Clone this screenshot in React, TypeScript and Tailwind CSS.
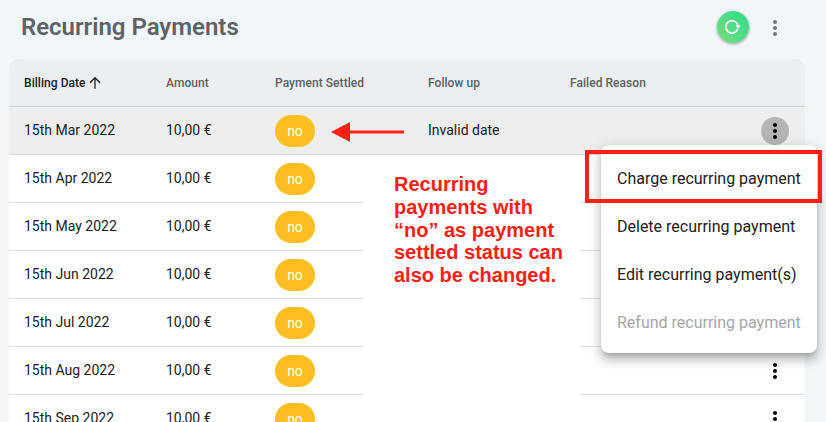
import React from 'react';

const months = ['Mar', 'Apr', 'May', 'Jun', 'Jul', 'Aug', 'Sep'];
const rowGrid = 'grid grid-cols-[142px_109px_153px_142px_1fr_48px] items-center';

function MoreVert({ className }: { className?: string }) {
  return (
    <svg viewBox="0 0 24 24" className={className} fill="currentColor">
      <path d="M12 8c1.1 0 2-.9 2-2s-.9-2-2-2-2 .9-2 2 .9 2 2 2zm0 2c-1.1 0-2 .9-2 2s.9 2 2 2 2-.9 2-2-.9-2-2-2zm0 6c-1.1 0-2 .9-2 2s.9 2 2 2 2-.9 2-2-.9-2-2-2z" />
    </svg>
  );
}

export default function App() {
  return (
    <div className="relative h-[422px] w-[826px] overflow-hidden bg-[#f1f6fa] font-['Roboto',sans-serif]">
      {/* Page Header */}
      <div className="flex h-[59px] items-start pl-[21px] pr-[39px] pt-[11px]">
        <h1 className="flex-1 text-[24px] leading-[32px] font-semibold tracking-[-0.02px] text-[#5f6368]">Recurring Payments</h1>
        <button className="mr-[14px] flex h-8 w-8 items-center justify-center rounded-full bg-gradient-to-tr from-[#74dc78] to-[#14dc90] shadow-[0_1px_3px_rgba(0,0,0,0.4)]">
          <svg viewBox="1.5 0.5 15 15" className="h-4 w-4" fill="none" stroke="white" strokeWidth="1.5">
            <path d="M13.4 10A5.8 5.8 0 1 1 13.7 7" />
            <path d="M11.3 6.6h4.8l-2.4 3z" fill="white" stroke="none" />
          </svg>
        </button>
        <MoreVert className="mt-[5px] h-6 w-6 text-[#757575]" />
      </div>

      {/* Table */}
      <div className="ml-[9px] w-[796px] bg-white">
        <div className={`${rowGrid} h-[48px] rounded-t-lg border-b border-[#cfd3d6] bg-[#ebeff2] text-[12px] font-medium tracking-[0.05px] text-[#616161]`}>
          <div className="flex items-center gap-[2px] pl-[15px] text-[#212121]">
            Billing Date
            <svg viewBox="0 0 24 24" className="h-[14px] w-[14px]" fill="none" stroke="#212121" strokeWidth="2.2">
              <path d="M12 22V3M3.5 11.5 12 3l8.5 8.5" />
            </svg>
          </div>
          <div className="pl-[15px]">Amount</div>
          <div className="pl-[15px]">Payment Settled</div>
          <div className="pl-[15px]">Follow up</div>
          <div className="pl-[15px]">Failed Reason</div>
          <div />
        </div>
        {months.map((m, i) => (
          <div
            key={m}
            className={`${rowGrid} h-[48px] border-b text-[14px] text-[#212121] ${i === 0 ? 'border-[#d6d6d6] bg-[#eeeeee]' : 'border-[#e0e0e0]'}`}
          >
            <div className="pl-[15px]">15th {m} 2022</div>
            <div className="pl-[15px]">10,00 €</div>
            <div className="pl-[15px]">
              <span className="flex h-8 w-10 items-center justify-center rounded-2xl bg-[#ffbf20] pt-[1px] text-[14px] text-white">no</span>
            </div>
            <div className="pl-[15px]">{i === 0 ? 'Invalid date' : ''}</div>
            <div />
            <div className="flex justify-start">
              <span className={`ml-[4px] flex h-7 w-7 items-center justify-center rounded-full ${i === 0 ? 'bg-[#b5b5b5]' : ''}`}>
                <MoreVert className="h-6 w-6 shrink-0 text-black" />
              </span>
            </div>
          </div>
        ))}
      </div>

      {/* Annotation */}
      <div className="absolute left-[363px] top-[155px] h-[267px] w-[217px] bg-white pl-[31px] pt-[18px] font-['Liberation_Sans',sans-serif] text-[20px] leading-[22.8px] font-bold text-[#fe2015]">
        Recurring
        <br />
        payments with
        <br />
        “no” as payment
        <br />
        settled status can
        <br />
        also be changed.
      </div>
      <svg className="absolute left-[331px] top-[122px] h-5 w-[73px]" viewBox="0 0 73 20">
        <path d="M19 0v8.5h54v3H19V20L0 10z" fill="#fe2015" />
      </svg>

      {/* Menu */}
      <div className="absolute left-[601px] top-[145px] w-[216px] rounded-lg bg-white pt-[10px] pb-[6px] text-[16px] text-[#212121] shadow-[0_5px_5px_-3px_rgba(0,0,0,0.2),0_8px_10px_1px_rgba(0,0,0,0.14),0_3px_14px_2px_rgba(0,0,0,0.12)]">
        <div className="flex h-12 items-center pl-4 whitespace-nowrap">Charge recurring payment</div>
        <div className="flex h-12 items-center pl-4 whitespace-nowrap">Delete recurring payment</div>
        <div className="flex h-12 items-center pl-4 whitespace-nowrap">Edit recurring payment(s)</div>
        <div className="flex h-12 items-center pl-4 whitespace-nowrap text-[#a6a6a6]">Refund recurring payment</div>
      </div>
      <div className="absolute left-[585px] top-[150px] h-[53px] w-[237px] border-4 border-[#fe2015]" />
    </div>
  );
}
